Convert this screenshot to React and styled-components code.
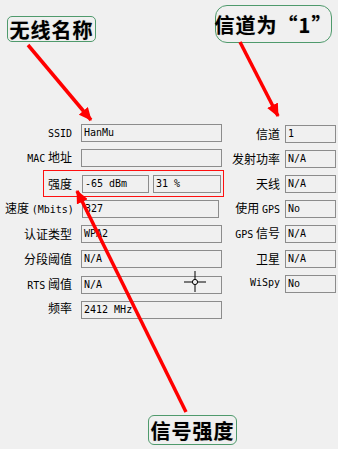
import React from 'react';
import styled, { createGlobalStyle } from 'styled-components';

const GlobalStyle = createGlobalStyle`
  body {
    margin: 0;
    background: #f0f0f0;
  }
`;

const Page = styled.div`
  position: relative;
  width: 338px;
  height: 449px;
  overflow: hidden;
  background: #f0f0f0;
  font-family: 'Noto Sans CJK SC', sans-serif;
  color: #000;
`;

const Header = styled.div`
  display: flex;
  align-items: flex-start;
  height: 124px;
`;

const Callout = styled.div`
  box-sizing: border-box;
  width: ${(p) => p.$w}px;
  height: ${(p) => p.$h}px;
  margin: ${(p) => p.$m};
  border: 1px solid #4f9a6c;
  border-radius: ${(p) => p.$r}px;
  display: flex;
  align-items: center;
  justify-content: center;
  font-size: 20px;
  font-weight: 700;
  letter-spacing: 1px;
  white-space: nowrap;
  text-shadow: 0 0 1px rgba(0, 0, 0, 0.35);
`;

const Form = styled.div`
  display: flex;
`;

const Column = styled.div`
  display: flex;
  flex-direction: column;
  width: ${(p) => p.$w}px;
  padding-top: ${(p) => p.$top || 0}px;
  gap: ${(p) => p.$gap}px;
`;

const Row = styled.div`
  position: relative;
  display: flex;
  align-items: center;
  height: 18px;
`;

/* red marker frame around the signal strength row */
const HighlightRow = styled.div`
  display: flex;
  align-items: center;
  box-sizing: border-box;
  width: 181px;
  height: 27px;
  margin: -4.5px 0 -4.5px 43px;
  border: 1px solid #ff1010;
`;

const Label = styled.div`
  flex: none;
  width: ${(p) => (p.$w ? `${p.$w}px` : 'auto')};
  margin-left: ${(p) => p.$ml || 0}px;
  margin-top: ${(p) => p.$dy || 0}px;
  text-align: ${(p) => p.$align || 'right'};
  font-size: 12px;
  line-height: 16px;
  white-space: nowrap;
`;

const Latin = styled.span`
  font-family: 'DejaVu Sans Mono', monospace;
  font-size: 10px;
`;

const Field = styled.div`
  position: relative;
  flex: none;
  box-sizing: border-box;
  width: ${(p) => p.$w}px;
  height: 18px;
  margin-left: ${(p) => p.$ml}px;
  padding: 0 2px;
  border: 1px solid #8c8c8c;
  font-family: 'DejaVu Sans Mono', monospace;
  font-size: 10px;
  line-height: 16px;
  white-space: nowrap;
`;

const Crosshair = styled.svg`
  position: absolute;
  left: 101px;
  top: -7px;
`;

const Footer = styled.div`
  display: flex;
  margin-top: 96px;
`;

const Arrows = styled.svg`
  position: absolute;
  left: 0;
  top: 0;
  pointer-events: none;
`;

const leftRows = [
  { label: <Latin>SSID</Latin>, value: 'HanMu' },
  { label: <><Latin>MAC</Latin> 地址</>, value: '' },
];

const leftRowsAfter = [
  { label: '认证类型', value: 'WPA2' },
  { label: '分段阈值', value: 'N/A' },
  { label: <><Latin>RTS</Latin> 阈值</>, value: 'N/A', cross: true },
  { label: '频率', value: '2412 MHz', dy: -5 },
];

const rightRows = [
  { label: '信道', value: '1' },
  { label: '发射功率', value: 'N/A' },
  { label: '天线', value: 'N/A' },
  { label: <>使用 <Latin>GPS</Latin></>, value: 'No' },
  { label: <><Latin>GPS</Latin> 信号</>, value: 'N/A' },
  { label: '卫星', value: 'N/A' },
  { label: <Latin>WiSpy</Latin>, value: 'No', dy: -4 },
];

function LeftRow({ label, value, cross, dy }) {
  return (
    <Row>
      <Label $w={72} $dy={dy}>{label}</Label>
      <Field $w={141} $ml={9}>
        {value}
        {cross && (
          <Crosshair width="24" height="24" viewBox="0 0 24 24">
            <path d="M1 12H9M15 12H23M12 1V9M12 15V22" stroke="#000" strokeWidth="1" />
            <circle cx="12" cy="12" r="2.6" fill="none" stroke="#000" strokeWidth="1" />
          </Crosshair>
        )}
      </Field>
    </Row>
  );
}

export default function App() {
  return (
    <Page>
      <GlobalStyle />
      <Header>
        <Callout $w={89} $h={26} $r={5} $m="16px 0 0 7px">无线名称</Callout>
        <Callout $w={117} $h={38} $r={12} $m="5px 6px 0 auto">信道为“1”</Callout>
      </Header>

      <Form>
        <Column $w={224} $gap={7.3}>
          {leftRows.map((r, i) => (
            <LeftRow key={i} {...r} />
          ))}
          <HighlightRow>
            <Label $w={28}>强度</Label>
            <Field $w={67} $ml={10}>-65 dBm</Field>
            <Field $w={68} $ml={4}>31 %</Field>
          </HighlightRow>
          <Row>
            <Label $w={75} $ml={5} $align="left">速度 <Latin>(Mbits)</Latin></Label>
            <Field $w={137} $ml={2}>327</Field>
          </Row>
          {leftRowsAfter.map((r, i) => (
            <LeftRow key={i} {...r} />
          ))}
        </Column>
        <Column $w={114} $gap={7} $top={1}>
          {rightRows.map((r, i) => (
            <Row key={i}>
              <Label $w={56} $dy={r.dy}>{r.label}</Label>
              <Field $w={51} $ml={5}>{r.value}</Field>
            </Row>
          ))}
        </Column>
      </Form>

      <Footer>
        <Callout $w={89} $h={30} $r={6} $m="0 0 0 148px">信号强度</Callout>
      </Footer>

      <Arrows width="338" height="449" viewBox="0 0 338 449">
        <defs>
          <marker id="head" markerUnits="userSpaceOnUse" markerWidth="14" markerHeight="12" refX="12" refY="6" orient="auto">
            <path d="M0 0L13 6L0 12Z" fill="#f00" />
          </marker>
        </defs>
        <g stroke="#f00" strokeWidth="3.5" fill="none" markerEnd="url(#head)">
          <line x1="28" y1="45" x2="91" y2="120" />
          <line x1="240" y1="42" x2="278" y2="116" />
          <line x1="186" y1="412" x2="77" y2="191" />
        </g>
      </Arrows>
    </Page>
  );
}
